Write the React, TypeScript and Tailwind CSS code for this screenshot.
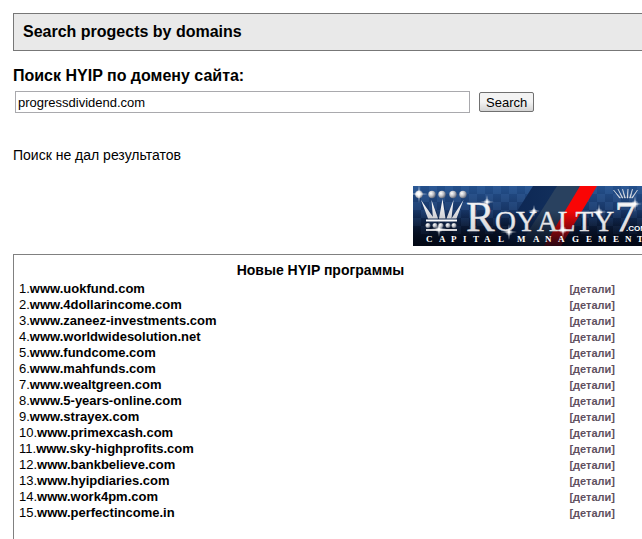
const domains = [
  "www.uokfund.com",
  "www.4dollarincome.com",
  "www.zaneez-investments.com",
  "www.worldwidesolution.net",
  "www.fundcome.com",
  "www.mahfunds.com",
  "www.wealtgreen.com",
  "www.5-years-online.com",
  "www.strayex.com",
  "www.primexcash.com",
  "www.sky-highprofits.com",
  "www.bankbelieve.com",
  "www.hyipdiaries.com",
  "www.work4pm.com",
  "www.perfectincome.in",
];

const sparkles = [
  { x: 6, y: 8, r: 9 },
  { x: 26, y: 43, r: 8 },
  { x: 74, y: 16, r: 7 },
  { x: 96, y: 46, r: 8 },
  { x: 121, y: 25, r: 6 },
  { x: 150, y: 44, r: 8 },
  { x: 186, y: 26, r: 8 },
  { x: 222, y: 18, r: 8 },
];

function Sparkle({ x, y, r }: { x: number; y: number; r: number }) {
  return (
    <g transform={`translate(${x} ${y})`}>
      <circle r={r * 0.5} fill="url(#glow)" />
      <path
        d={`M0 ${-r}L.6 -.6L${r} 0L.6 .6L0 ${r}L-.6 .6L${-r} 0L-.6 -.6Z`}
        fill="#fff"
      />
    </g>
  );
}

function Banner() {
  return (
    <svg
      viewBox="0 0 229 60"
      role="img"
      aria-label="Royalty7.com Capital Management"
      className="h-[60px] w-[229px] shrink-0"
    >
      <defs>
        <linearGradient id="sky" x1="0" y1="0" x2="0" y2="1">
          <stop offset="0" stopColor="#24508c" />
          <stop offset=".5" stopColor="#142f5c" />
          <stop offset="1" stopColor="#040a18" />
        </linearGradient>
        <linearGradient id="shade" x1="0" y1="0" x2="0" y2="1">
          <stop offset=".4" stopColor="#020714" stopOpacity="0" />
          <stop offset="1" stopColor="#020714" stopOpacity=".85" />
        </linearGradient>
        <linearGradient id="navy" x1="0" y1="0" x2="1" y2="0">
          <stop offset="0" stopColor="#0b2450" />
          <stop offset="1" stopColor="#143360" />
        </linearGradient>
        <linearGradient id="silver" x1="0" y1="0" x2="0" y2="1">
          <stop offset="0" stopColor="#fff" />
          <stop offset="1" stopColor="#d0d0d4" />
        </linearGradient>
        <radialGradient id="ball" cx=".35" cy=".35" r=".7">
          <stop offset="0" stopColor="#fff" />
          <stop offset=".5" stopColor="#c2c4ca" />
          <stop offset="1" stopColor="#5b6274" />
        </radialGradient>
        <radialGradient id="glow">
          <stop offset="0" stopColor="#fff" />
          <stop offset="1" stopColor="#fff" stopOpacity="0" />
        </radialGradient>
        <pattern id="checks" width="16" height="16" patternUnits="userSpaceOnUse">
          <path d="M0 0h8v8H0zM8 8h8v8H8z" fill="#5b8fd0" opacity=".14" />
        </pattern>
      </defs>

      <rect width="229" height="60" fill="url(#sky)" />
      <rect width="229" height="48" fill="url(#checks)" />
      <path d="M120 0h47l-35 60H82z" fill="url(#navy)" />
      <path d="M144 0h23l-35 60H106z" fill="#29415f" />
      <path d="M167 0h17l-36 60h-17z" fill="#fa0505" />
      <rect width="229" height="60" fill="url(#shade)" />

      {/* crown */}
      <g fill="url(#silver)">
        <path d="M8 14L15 32.500h6zM18.500 14L20 32.500h5zM29.500 13L26 32.500h6.500zM40.500 14L33.500 32.500h5zM50.500 14L38.500 32.500h5z" />
        <path d="M13 33.500h31v2H13zM13 43h31v2H13z" />
      </g>
      <g fill="url(#ball)">
        {[6, 19, 29, 40, 50].map((cx) => (
          <circle key={cx} cx={cx} cy="8.500" r="3.700" />
        ))}
        {[15, 22, 28, 35, 41].map((cx) => (
          <circle key={cx} cx={cx} cy="39.500" r="2.500" />
        ))}
      </g>

      <g
        fill="url(#silver)"
        className="font-['Liberation_Serif',serif] [font-kerning:none]"
      >
        <text x="53" y="45" fontSize="43" stroke="#e4e4e8" strokeWidth=".4">
          R
        </text>
        <text x="82" y="45" fontSize="29" stroke="#e4e4e8" strokeWidth=".4">
          OYALTY
        </text>
        <text x="202" y="45" fontSize="42" stroke="#e4e4e8" strokeWidth=".8">
          7
        </text>
        <text
          x="13 26 38 50 60 71 85 95 104 120 132 145 159 173 185 200 212 224"
          y="56"
          fontSize="9"
          fontWeight="bold"
          fill="#fff"
        >
          CAPITAL MANAGEMENT
        </text>
      </g>
      <text
        x="213"
        y="45"
        fontSize="8"
        fontWeight="bold"
        fill="#fff"
        className="font-['Liberation_Sans',sans-serif]"
      >
        .COM
      </text>

      {/* small crown above the 7 */}
      <path
        d="M200.500 4l6 8h1zM205 3l4 9h1zM209.500 3l2 9h1zM215 3l-1 9h1zM219.500 3l-3 9h1zM224.500 4l-6 8h1z"
        fill="#e4e6ea"
        stroke="#e4e6ea"
        strokeWidth=".5"
      />
      {sparkles.map((s) => (
        <Sparkle key={s.x} {...s} />
      ))}
    </svg>
  );
}

export default function App() {
  return (
    <main className="min-h-screen bg-white pt-[13px] pl-[13px] font-['Liberation_Sans',Arial,sans-serif] text-sm text-black">
      <h1 className="border border-r-0 border-[#777777] bg-[#e9e9e9] px-[9px] py-1.5 text-base font-bold">
        Search progects by domains
      </h1>

      <form onSubmit={(e) => e.preventDefault()} className="pt-[13px]">
        <label htmlFor="domain" className="block text-base font-bold">
          Поиск HYIP по домену сайта:
        </label>
        <div className="flex items-center gap-[9px] pt-[3px] pl-0.5">
          <input
            id="domain"
            type="text"
            defaultValue="progressdividend.com"
            className="h-[22px] w-[455px] border border-[#a9a9ad] bg-white px-0.5 text-[13px]"
          />
          <button
            type="submit"
            className="h-5 rounded-xs border border-[#707070] bg-linear-to-b from-[#f3f3f3] from-50% to-[#d4d4d4] px-1.5 pt-0.5 text-[13px] leading-4"
          >
            Search
          </button>
        </div>
      </form>

      <p className="pt-8">Поиск не дал результатов</p>

      <div className="flex justify-end pt-[21px]">
        <Banner />
      </div>

      <section className="mt-2 border-t border-l border-[#808080] pt-1 pr-[15px] pb-5">
        <h2 className="text-center text-sm leading-[22px] font-bold">
          Новые HYIP программы
        </h2>
        <table className="w-full text-[13px] leading-4">
          <tbody>
            {domains.map((d, i) => (
              <tr key={d}>
                <td className="p-0 pl-[5px]">
                  {i + 1}.
                  <a href={`http://${d}`} className="font-bold">
                    {d}
                  </a>
                </td>
                <td className="p-0 pr-3 text-right text-[11px]">
                  <a href={`#${d}`} className="font-bold text-[#5f5060]">
                    [детали]
                  </a>
                </td>
              </tr>
            ))}
          </tbody>
        </table>
      </section>
    </main>
  );
}
